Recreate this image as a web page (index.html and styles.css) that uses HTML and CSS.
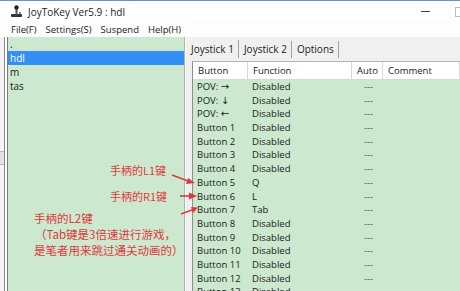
FILE: index.html
```html
<!DOCTYPE html>
<html>
<head>
<meta charset="UTF-8">
<title>JoyToKey Ver5.9 : hdl</title>
<link rel="stylesheet" href="styles.css">
</head>
<body>
<div class="titlebar">
    <svg class="appicon" width="13" height="13" viewBox="0 0 13 13">
        <rect x="1" y="9" width="11" height="3" rx="1" fill="#333"/>
        <rect x="5.5" y="2" width="2" height="8" fill="#555"/>
        <circle cx="6.5" cy="2.5" r="2.2" fill="#222"/>
        <rect x="9" y="7" width="2" height="2" fill="#888"/>
    </svg>
    <span class="title">JoyToKey Ver5.9 : hdl</span>
    <span class="min"></span>
    <span class="max"></span>
</div>
<div class="menubar">
    <span>File(F)</span>
    <span>Settings(S)</span>
    <span>Suspend</span>
    <span>Help(H)</span>
</div>
<div class="main">
    <div class="edge"><span class="edgemark"></span></div>
    <div class="list">
        <div class="item">.</div>
        <div class="item selected">hdl</div>
        <div class="item">m</div>
        <div class="item">tas</div>
    </div>
    <div class="right">
        <div class="tabs">
            <span class="tab active">Joystick 1</span>
            <span class="tab">Joystick 2</span>
            <span class="tab">Options</span>
        </div>
        <div class="grid">
            <div class="row head">
                <span>Button</span><span>Function</span><span>Auto</span><span>Comment</span>
            </div>
            <div class="row"><span>POV: <i class="arr">&rarr;</i></span><span>Disabled</span><span class="auto">---</span><span></span></div>
            <div class="row"><span>POV: <i class="arr">&darr;</i></span><span>Disabled</span><span class="auto">---</span><span></span></div>
            <div class="row"><span>POV: <i class="arr">&larr;</i></span><span>Disabled</span><span class="auto">---</span><span></span></div>
            <div class="row"><span>Button 1</span><span>Disabled</span><span class="auto">---</span><span></span></div>
            <div class="row"><span>Button 2</span><span>Disabled</span><span class="auto">---</span><span></span></div>
            <div class="row"><span>Button 3</span><span>Disabled</span><span class="auto">---</span><span></span></div>
            <div class="row"><span>Button 4</span><span>Disabled</span><span class="auto">---</span><span></span></div>
            <div class="row"><span>Button 5</span><span>Q</span><span class="auto">---</span><span></span></div>
            <div class="row"><span>Button 6</span><span>L</span><span class="auto">---</span><span></span></div>
            <div class="row"><span>Button 7</span><span>Tab</span><span class="auto">---</span><span></span></div>
            <div class="row"><span>Button 8</span><span>Disabled</span><span class="auto">---</span><span></span></div>
            <div class="row"><span>Button 9</span><span>Disabled</span><span class="auto">---</span><span></span></div>
            <div class="row"><span>Button 10</span><span>Disabled</span><span class="auto">---</span><span></span></div>
            <div class="row"><span>Button 11</span><span>Disabled</span><span class="auto">---</span><span></span></div>
            <div class="row"><span>Button 12</span><span>Disabled</span><span class="auto">---</span><span></span></div>
            <div class="row"><span>Button 13</span><span>Disabled</span><span class="auto">---</span><span></span></div>
        </div>
    </div>
</div>

<!-- red notes drawn over the screenshot -->
<div class="note note-l1">手柄的L1键</div>
<div class="note note-r1">手柄的R1键</div>
<div class="note note-l2">手柄的L2键<br><span class="paren">（Tab键是3倍速进行游戏，</span><br>是笔者用来跳过通关动画的）</div>
<svg class="arrows" width="460" height="291" viewBox="0 0 460 291">
    <g stroke="#e0383a" stroke-width="1.6" fill="#e0383a">
        <line x1="172" y1="175" x2="188" y2="181"/>
        <polygon points="195,183 186,184 188,178" stroke="none"/>
        <line x1="180" y1="196" x2="190" y2="196"/>
        <polygon points="197,196 189,192.5 189,199.5" stroke="none"/>
        <line x1="181" y1="214" x2="192" y2="210"/>
        <polygon points="198,207.5 193,213 191,207" stroke="none"/>
    </g>
</svg>
</body>
</html>
```

FILE: styles.css
```css
html, body {
    margin: 0;
    padding: 0;
}
body {
    width: 460px;
    height: 291px;
    overflow: hidden;
    background: #fff;
    font-family: "Open Sans", "Noto Sans", sans-serif;
    font-size: 9.5px;
    color: #1a1a1a;
    display: flex;
    flex-direction: column;
    position: relative;
}

.titlebar {
    height: 21px;
    flex-shrink: 0;
    border-top: 1px solid #6b93bb;
    display: flex;
    align-items: center;
    padding-left: 10px;
    position: relative;
    background: #fff;
}
.appicon {
    margin-right: 5px;
}
.title {
    font-size: 10px;
    color: #222;
}
.min {
    position: absolute;
    left: 421px;
    top: 10px;
    width: 9px;
    height: 1px;
    background: #444;
}
.max {
    position: absolute;
    left: 455px;
    top: 6px;
    width: 8px;
    height: 8px;
    border: 1px solid #bbb;
}

.menubar {
    height: 15px;
    flex-shrink: 0;
    display: flex;
    align-items: center;
    padding-left: 11px;
    gap: 8px;
    background: #fdfdfd;
}
.menubar span {
    padding-right: 1px;
}

.main {
    flex: 1;
    display: flex;
    min-height: 0;
}
.edge {
    width: 4px;
    border-right: 1px solid #8a8a8a;
    margin-right: 2px;
    background: #f4f4f4;
    position: relative;
}
.edgemark {
    position: absolute;
    left: 0;
    top: 114px;
    width: 4px;
    height: 12px;
    border-top: 1px solid #bbb;
    border-bottom: 1px solid #bbb;
    background: #e2e2e2;
}
.list {
    width: 176px;
    background: #cce8cf;
    border-left: 1px solid #6d7f95;
    border-right: 1px solid #a8b8a8;
}
.item {
    height: 14px;
    line-height: 14px;
    padding-left: 2px;
    font-size: 10px;
}
.item.selected {
    background: #3390f2;
    color: #fff;
}

.right {
    flex: 1;
    background: #f0f0f0;
    padding-left: 4px;
    border-left: 1px solid #fff;
    display: flex;
    flex-direction: column;
    min-height: 0;
}
.tabs {
    height: 24px;
    flex-shrink: 0;
    display: flex;
    align-items: center;
}
.tab {
    padding: 0 4px 0 1px;
    margin-right: 4px;
    border-right: 1px solid #a0a0a0;
    line-height: 17px;
    font-size: 10px;
}
.tab.active {
    padding-top: 1px;
}

.grid {
    flex: 1;
    min-height: 0;
    overflow: hidden;
    margin-left: 2px;
    background: #cce8cf;
    border-left: 1px solid #8e8e8e;
    border-top: 1px solid #b4b4b4;
}
.row {
    display: grid;
    grid-template-columns: 55px 104px 31px 1fr;
    height: 13.7px;
    line-height: 13.7px;
    white-space: nowrap;
}
.row span {
    padding-left: 4px;
    overflow: hidden;
}
.arr {
    font-style: normal;
    font-family: "DejaVu Sans", sans-serif;
    font-size: 10px;
}
.row.head {
    height: 17px;
    line-height: 17px;
    background: #fff;
    border-bottom: 1px solid #d8d8d8;
}
.row.head span {
    padding-left: 5px;
    border-right: 1px solid #d8d8d8;
}
.row .auto {
    padding-left: 12px;
    color: #555;
}

.note {
    position: absolute;
    color: #e0383a;
    font-family: "Noto Sans CJK SC", "Noto Sans", sans-serif;
    font-size: 11px;
    line-height: 16px;
    white-space: nowrap;
}
.note-l1 {
    left: 110px;
    top: 162px;
}
.note-r1 {
    left: 110px;
    top: 188px;
}
.note-l2 {
    left: 34px;
    top: 210px;
    font-size: 11.5px;
}
.note-l2 .paren {
    margin-left: 1px;
}
.arrows {
    position: absolute;
    left: 0;
    top: 0;
}
```
